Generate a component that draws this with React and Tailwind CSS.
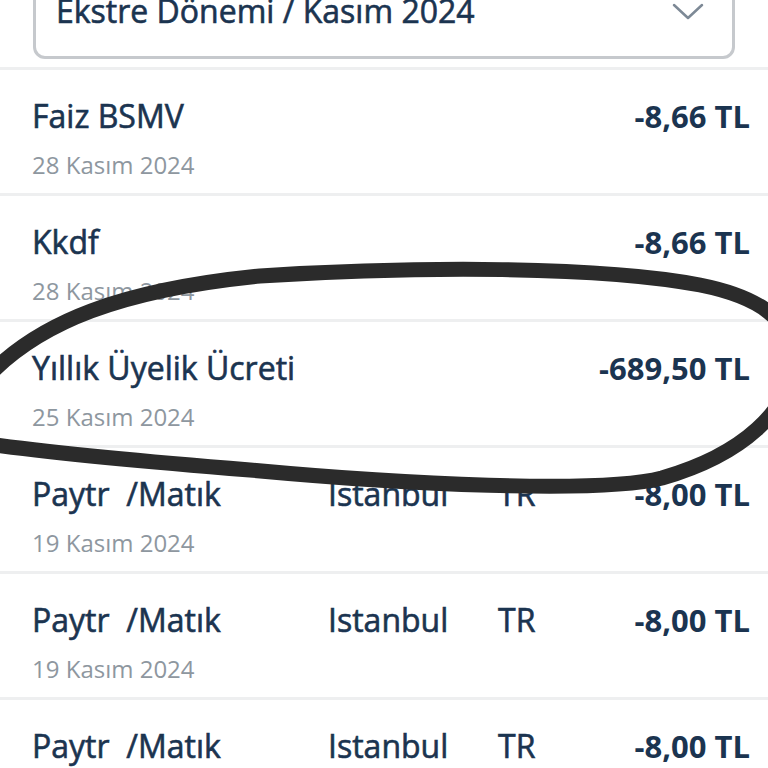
const rows = [
  { title: "Faiz BSMV", date: "28 Kasım 2024", amount: "-8,66 TL" },
  { title: "Kkdf", date: "28 Kasım 2024", amount: "-8,66 TL" },
  { title: "Yıllık Üyelik Ücreti", date: "25 Kasım 2024", amount: "-689,50 TL" },
  { title: "Paytr  /Matık", city: "Istanbul", country: "TR", date: "19 Kasım 2024", amount: "-8,00 TL" },
  { title: "Paytr  /Matık", city: "Istanbul", country: "TR", date: "19 Kasım 2024", amount: "-8,00 TL" },
  { title: "Paytr  /Matık", city: "Istanbul", country: "TR", date: "19 Kasım 2024", amount: "-8,00 TL" },
];

export default function App() {
  return (
    <div
      className="relative h-[768px] w-[768px] overflow-hidden bg-white"
      style={{ fontFamily: '"Open Sans", "Noto Sans", sans-serif' }}
    >
      {/* Period select */}
      <div className="px-[33px] pb-[8px]">
        <div className="-mt-[42px] flex h-[101px] items-start justify-between rounded-[12px] border-[3px] border-[#c6c9cd] pl-[20px] pr-[28px]">
          <span className="pt-[30px] text-[32px] leading-[40px] text-[#1b3450] [-webkit-text-stroke:0.6px_#1b3450]">
            Ekstre Dönemi / Kasım 2024
          </span>
          <svg className="mt-[41px]" width="32" height="18" viewBox="0 0 32 18">
            <polyline points="2,3 16,16 30,3" fill="none" stroke="#7d8996" strokeWidth="2.5" strokeLinecap="round" strokeLinejoin="round" />
          </svg>
        </div>
      </div>

      {/* Transactions */}
      <div>
        {rows.map((row, index) => (
          <div key={index} className="h-[126px] border-t-[3px] border-[#eeeff0] pl-[32px] pr-[18px] pt-[25px]">
            <div className="flex items-center text-[32px] leading-[42px] text-[#1b3450]">
              <span className="w-[296px] whitespace-pre [-webkit-text-stroke:0.6px_#1b3450]">{row.title}</span>
              {row.city && <span className="w-[170px] [-webkit-text-stroke:0.6px_#1b3450]">{row.city}</span>}
              {row.country && <span className="[-webkit-text-stroke:0.6px_#1b3450]">{row.country}</span>}
              <span className="ml-auto text-[31px] font-bold">{row.amount}</span>
            </div>
            <div className="mt-[12px] text-[24px] leading-[32px] text-[#8e979f]">{row.date}</div>
          </div>
        ))}
      </div>

      {/* Hand-drawn circle */}
      <svg className="pointer-events-none absolute left-0 top-0" width="768" height="768" viewBox="0 0 768 768">
        <path
          d="M -12 376 C 40 322, 120 290, 260 276 C 420 266, 600 266, 700 285 C 760 297, 792 320, 792 360 C 792 410, 742 455, 662 478 C 600 494, 400 484, 250 470 C 150 462, 60 454, -12 444"
          fill="none"
          stroke="#2b2b2b"
          strokeWidth="15"
          strokeLinecap="round"
        />
      </svg>
    </div>
  );
}
